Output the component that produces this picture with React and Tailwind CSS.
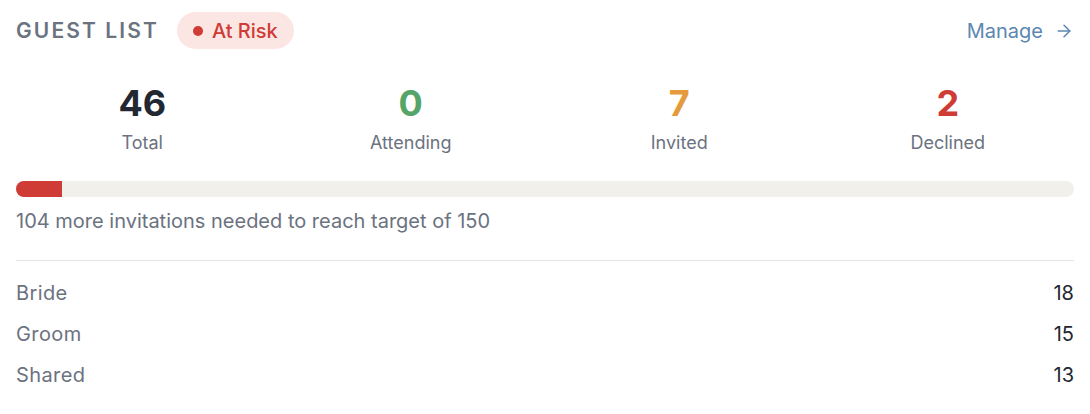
import { ArrowRight } from 'lucide-react';

const stats = [
  { label: 'Total', value: 46, color: 'text-[#222831]' },
  { label: 'Attending', value: 0, color: 'text-[#55a468]' },
  { label: 'Invited', value: 7, color: 'text-[#e59b3c]' },
  { label: 'Declined', value: 2, color: 'text-[#cf3b35]' },
];

const sides = [
  { label: 'Bride', value: 18 },
  { label: 'Groom', value: 15 },
  { label: 'Shared', value: 13 },
];

export default function App() {
  return (
    <div className="min-h-[414px] bg-white px-4 pt-3 font-['Inter',sans-serif]">
      <div className="flex items-center justify-between">
        <div className="flex items-center gap-[18px]">
          <h2 className="text-[21px] font-semibold uppercase tracking-[0.1em] text-[#6b7280]">Guest List</h2>
          <span className="flex h-[37px] items-center gap-[9px] rounded-full bg-[#fbe6e4] px-4 text-[20px] font-medium text-[#cf3b35]">
            <span className="h-[10px] w-[10px] rounded-full bg-[#cf3b35]" />
            At Risk
          </span>
        </div>
        <a className="flex items-center gap-[11px] text-[20px] text-[#5b87b0]">
          Manage
          <ArrowRight size={20} strokeWidth={1.75} />
        </a>
      </div>

      <div className="mt-8 grid grid-cols-4 gap-4">
        {stats.map((s) => (
          <div key={s.label} className="flex flex-col items-center">
            <span className={`text-[36px] font-bold leading-[44px] ${s.color}`}>{s.value}</span>
            <span className="mt-1 text-[18px] text-[#6b7280]">{s.label}</span>
          </div>
        ))}
      </div>

      <div className="mt-[25px] h-4 overflow-hidden rounded-full bg-[#f2f0eb]">
        <div className="h-full bg-[#cf3b35]" style={{ width: `${(46 / 1058) * 100}%` }} />
      </div>
      <p className="mt-[9px] text-[20px] text-[#6b7280]">104 more invitations needed to reach target of 150</p>

      <div className="mt-6 border-t border-[#e5e4df] pt-[11px]">
        {sides.map((r) => (
          <div key={r.label} className="flex h-[41px] items-center justify-between text-[20px]">
            <span className="tracking-[0.02em] text-[#6b7280]">{r.label}</span>
            <span className="text-[#222831]">{r.value}</span>
          </div>
        ))}
      </div>
    </div>
  );
}
